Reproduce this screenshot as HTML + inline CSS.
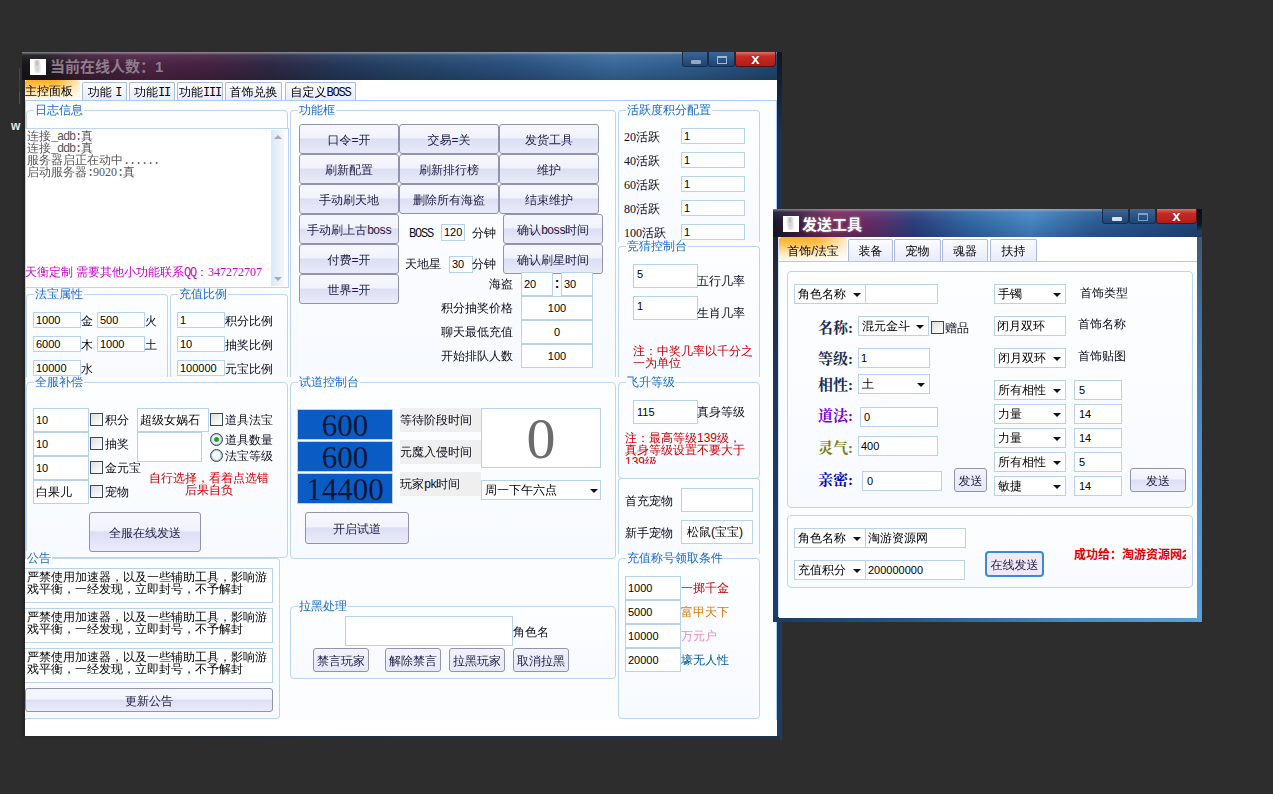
<!DOCTYPE html>
<html lang="zh-CN"><head><meta charset="utf-8"><title>UI</title>
<style>
html,body{margin:0;padding:0}
body{width:1273px;height:794px;overflow:hidden;background:#2d2d2d;position:relative;
 font:12px/12px "Liberation Sans","WenQuanYi Zen Hei","Noto Sans CJK SC",sans-serif;color:#101028}
div,span,i{box-sizing:content-box}
.abs,.t,.tt,.g,.gl,.i,.b,.ck,.rd,.tab,.page,.cb,.cbx,.bp,.lb,.w1frame,.w1title,.w2frame,.w2title{position:absolute}
.t{white-space:nowrap;height:12px;line-height:12px;font-size:12px;color:#0c0c1c}
.mn{font:12px/12px "Liberation Mono",monospace;letter-spacing:-1.2px}
.sm{font-family:"Liberation Serif","WenQuanYi Zen Hei","Noto Sans CJK SC",serif}
.tt{white-space:nowrap;font:bold 15px/18px "Liberation Sans","Noto Sans CJK SC",sans-serif}
.lb{white-space:nowrap;font:bold 15px/16px "Liberation Serif","Noto Serif CJK SC",serif}
.g{border:1px solid #bdd6f0;border-radius:4px;background:linear-gradient(180deg,#fdfeff,#f7faff)}
.gl{height:14px;line-height:14px;color:#1c6cc4;white-space:nowrap;text-align:center;font-size:12px}
.i{border:1px solid #b9d2ec;background:#fff;overflow:hidden}
.cj{font-size:12px !important}
.it{position:absolute;white-space:nowrap;height:12px;line-height:12px;font-size:11px;color:#000}
.b{border:1px solid #9193ac;border-radius:3px;text-align:center;color:#1c1c40;white-space:nowrap;
 background:linear-gradient(180deg,#f7f8fe 0,#f1f3fc 46%,#dcdff4 50%,#e9ebf9 100%);overflow:hidden}
.b>span{display:block}
.b.flat{background:linear-gradient(180deg,#f1f2fc 0,#e6e8f8 100%)}
.b.focus{border:2px solid #3c8ccc;border-radius:4px;margin:-1px;background:#f1e8f8}
.ck{border:1px solid #2e4a66;background:linear-gradient(135deg,#dcdcd8,#f4f4f2 60%,#fff)}
.rd{border:1px solid #2c4c64;box-shadow:inset 0 0 0 1px rgba(44,76,100,.3);border-radius:50%;background:radial-gradient(circle at 40% 40%,#fff,#dfe6ec)}
.dot{position:absolute;left:3px;top:3px;width:5px;height:5px;border-radius:50%;background:#28a428}
.ar{position:absolute;width:0;height:0;border:4px solid transparent;border-bottom:none;border-top:4px solid #0c1030}
.tab{border:1px solid #a9bcdc;border-bottom:none;border-radius:2px 2px 0 0;text-align:center;color:#000;white-space:nowrap;
 background:linear-gradient(180deg,#fbfcff,#e6ebf9)}
.tab>span{display:block;line-height:18px}
.tab.on{border:none;background:linear-gradient(90deg,rgba(255,255,255,0) 55%,rgba(255,255,255,.75) 100%),linear-gradient(180deg,#ffae20 0,#ffc75c 35%,#ffe9bd 70%,#fdfcf8 100%)}
.tab.on>span{line-height:22px}
.page{border:1px solid #a9cdf0;border-bottom:none;background:#fbfdff}
.w1frame{background:#262628}
.w1title{background:linear-gradient(180deg,rgba(255,255,255,.10),rgba(255,255,255,0) 45%,rgba(0,0,0,.18)),linear-gradient(90deg,#17151a 0,#1c171e 3%,#3a1c34 7%,#4e2344 16%,#43223f 25%,#2e2844 33%,#24385a 42%,#254366 50%,#2b507e 65%,#396898 78%,#2f5c8c 88%,#1f456f 100%)}
.w2frame{background:linear-gradient(90deg,#1c3a5c 0,#2c5a8c 50%,#4a8cc8 100%)}
.w2title{background:linear-gradient(180deg,rgba(255,255,255,.10),rgba(255,255,255,0) 45%,rgba(0,0,0,.15)),linear-gradient(90deg,#17182a 0,#3c1f42 6%,#7a2a5c 14%,#642c68 23%,#2c3f7c 33%,#2f64a0 45%,#4684c0 60%,#2c5c94 75%,#1e4474 100%)}
.cb{background:linear-gradient(180deg,#3c6494,#1c4474);border:1px solid #16304c;border-top:none;box-sizing:border-box;border-radius:0 0 3px 3px}
.cbx{background:linear-gradient(180deg,#e0706a 0,#c42c26 30%,#b41c18 100%);border:1px solid #501410;border-top:none;box-sizing:border-box;border-radius:0 0 4px 3px;text-align:center}
.cbx>span{display:block;color:#fff;font:bold 15px/13px "Liberation Sans",sans-serif;text-shadow:0 0 2px rgba(80,0,0,.6)}
.bp{border:1px solid #b9d4f0;background:#0a5cc4;text-align:center;overflow:hidden}
.bp>span{display:block;font:31px/32px "Liberation Serif",serif;color:#0a1838}
.big0{display:block;text-align:center;font:58px/60px "Liberation Serif",serif;color:#6c6c6c}
.fig{position:absolute;left:3px;top:1px;width:9px;height:13px;background:radial-gradient(ellipse at 45% 25%,#b9b3b6 0,#d8d3d5 25%,rgba(255,255,255,0) 55%),radial-gradient(ellipse at 50% 65%,#cfc9cc 0,#e6e2e4 35%,rgba(255,255,255,0) 65%)}
</style></head>
<body>
<div class="w1frame" style="left:22px;top:52px;width:760px;height:688px;"></div>
<div class="w1title" style="left:22px;top:52px;width:758px;height:28px;"></div>
<div class="abs" style="left:22px;top:52px;width:758px;height:3px;background:linear-gradient(180deg,rgba(200,205,210,.55),rgba(200,205,210,0))"></div>
<div class="abs" style="left:777px;top:52px;width:5px;height:688px;background:linear-gradient(180deg,#10161e 0,#1b3352 12%,#1f3c62 100%)"></div>
<div class="abs" style="left:25px;top:80px;width:752px;height:656px;background:#fff"></div>
<div class="abs" style="left:22px;top:736px;width:758px;height:4px;background:linear-gradient(180deg,rgba(45,45,45,0),#2d2d2d),linear-gradient(90deg,#29292b 0,#29292b 20%,#1f3048 45%,#1d3350 100%)"></div>
<div class="abs" style="left:30px;top:59px;width:16px;height:16px;background:#fff"><i class="fig"></i></div>
<div class="tt" style="left:50px;top:58px;color:#8d7e8b">当前在线人数：1</div>
<div class="cb" style="left:682px;top:52px;width:26px;height:15px;"><i style="position:absolute;left:8px;top:8px;width:10px;height:4px;background:#8fa9c8;border-radius:1px"></i></div>
<div class="cb" style="left:708px;top:52px;width:27px;height:15px;"><i style="position:absolute;left:8px;top:4px;width:10px;height:8px;border:1px solid #9fb9d8;border-top-width:2px;box-sizing:border-box"></i></div>
<div class="cbx" style="left:735px;top:52px;width:41px;height:15px;"><span>x</span></div>
<div class="tab on" style="left:25px;top:80px;width:55px;height:20px;"><span style="text-align:left">主控面板</span></div>
<div class="tab" style="left:82px;top:82px;width:43px;height:18px;"><span>功能 <span class="mn">I</span></span></div>
<div class="tab" style="left:129px;top:82px;width:44px;height:18px;"><span>功能<span class="mn">II</span></span></div>
<div class="tab" style="left:177px;top:82px;width:44px;height:18px;"><span>功能<span class="mn">III</span></span></div>
<div class="tab" style="left:225px;top:82px;width:55px;height:18px;"><span>首饰兑换</span></div>
<div class="tab" style="left:285px;top:82px;width:69px;height:18px;"><span>自定义<span class="mn">BOSS</span></span></div>
<div class="page" style="left:25px;top:100px;width:750px;height:619px;"></div>
<div class="g" style="left:26px;top:110px;width:260px;height:169px;"></div>
<div class="gl" style="left:34px;top:103px;width:50px;background:#f9fbff">日志信息</div>
<div class="g" style="left:290px;top:110px;width:324px;height:266px;border-bottom:none;border-bottom-left-radius:0;border-bottom-right-radius:0;"></div>
<div class="gl" style="left:298px;top:103px;width:38px;background:#f9fbff">功能框</div>
<div class="g" style="left:618px;top:110px;width:140px;height:131px;border-bottom:none;border-bottom-left-radius:0;border-bottom-right-radius:0;"></div>
<div class="gl" style="left:626px;top:103px;width:86px;background:#f9fbff">活跃度积分配置</div>
<div class="g" style="left:618px;top:246px;width:140px;height:130px;border-bottom:none;border-bottom-left-radius:0;border-bottom-right-radius:0;"></div>
<div class="gl" style="left:626px;top:239px;width:62px;background:#f9fbff">竞猜控制台</div>
<div class="g" style="left:26px;top:294px;width:140px;height:82px;border-bottom:none;border-bottom-left-radius:0;border-bottom-right-radius:0;"></div>
<div class="gl" style="left:34px;top:287px;width:50px;background:#f9fbff">法宝属性</div>
<div class="g" style="left:170px;top:294px;width:116px;height:82px;border-bottom:none;border-bottom-left-radius:0;border-bottom-right-radius:0;"></div>
<div class="gl" style="left:178px;top:287px;width:50px;background:#f9fbff">充值比例</div>
<div class="g" style="left:26px;top:382px;width:260px;height:174px;"></div>
<div class="gl" style="left:34px;top:375px;width:50px;background:#f9fbff">全服补偿</div>
<div class="g" style="left:290px;top:382px;width:324px;height:175px;"></div>
<div class="gl" style="left:298px;top:375px;width:62px;background:#f9fbff">试道控制台</div>
<div class="g" style="left:618px;top:382px;width:140px;height:95px;"></div>
<div class="gl" style="left:626px;top:375px;width:50px;background:#f9fbff">飞升等级</div>
<div class="g" style="left:618px;top:478px;width:140px;height:75px;border-bottom:none;border-bottom-left-radius:0;border-bottom-right-radius:0;"></div>
<div class="g" style="left:618px;top:558px;width:140px;height:159px;"></div>
<div class="gl" style="left:626px;top:551px;width:98px;background:#f9fbff">充值称号领取条件</div>
<div class="g" style="left:25px;top:558px;width:254px;height:159px;border-left:none;border-top-left-radius:0;border-bottom-left-radius:0;"></div>
<div class="gl" style="left:26px;top:551px;width:26px;background:#f9fbff">公告</div>
<div class="g" style="left:290px;top:606px;width:324px;height:71px;"></div>
<div class="gl" style="left:298px;top:599px;width:50px;background:#f9fbff">拉黑处理</div>
<div class="i" style="left:25px;top:128px;width:262px;height:158px;border-color:#bcd4ee"></div>
<div class="abs" style="left:271px;top:130px;width:13px;height:156px;background:linear-gradient(90deg,#dce8f8,#f3f6fc)"></div>
<i class="abs" style="left:274px;top:135px;border:4px solid transparent;border-top:none;border-bottom:4px solid #a6acb6"></i>
<i class="abs" style="left:274px;top:277px;border:4px solid transparent;border-bottom:none;border-top:4px solid #a6acb6"></i>
<div class="t sm" style="left:27px;top:130px;color:#555">连接<span class="mn">_adb:</span>真</div>
<div class="t sm" style="left:27px;top:142px;color:#555">连接<span class="mn">_ddb:</span>真</div>
<div class="t sm" style="left:27px;top:154px;color:#555">服务器启正在动中<span class="mn">......</span></div>
<div class="t sm" style="left:27px;top:166px;color:#555">启动服务器<span class="mn">:</span>9020<span class="mn">:</span>真</div>
<div class="t sm" style="left:25px;top:266px;color:#cc00cc">天衡定制 需要其他小功能联系<span class="mn">QQ</span>：347272707</div>
<div class="b" style="left:299px;top:124px;width:98px;height:28px;"><span style="line-height:30px">口令=开</span></div>
<div class="b" style="left:399px;top:124px;width:98px;height:28px;"><span style="line-height:30px">交易=关</span></div>
<div class="b" style="left:499px;top:124px;width:98px;height:28px;"><span style="line-height:30px">发货工具</span></div>
<div class="b" style="left:299px;top:154px;width:98px;height:28px;"><span style="line-height:30px">刷新配置</span></div>
<div class="b" style="left:399px;top:154px;width:98px;height:28px;"><span style="line-height:30px">刷新排行榜</span></div>
<div class="b" style="left:499px;top:154px;width:98px;height:28px;"><span style="line-height:30px">维护</span></div>
<div class="b" style="left:299px;top:184px;width:98px;height:28px;"><span style="line-height:30px">手动刷天地</span></div>
<div class="b" style="left:399px;top:184px;width:98px;height:28px;"><span style="line-height:30px">删除所有海盗</span></div>
<div class="b" style="left:499px;top:184px;width:98px;height:28px;"><span style="line-height:30px">结束维护</span></div>
<div class="b" style="left:299px;top:214px;width:98px;height:28px;"><span style="line-height:30px">手动刷上古<span class="mn">boss</span></span></div>
<div class="b" style="left:299px;top:244px;width:98px;height:28px;"><span style="line-height:30px">付费=开</span></div>
<div class="b" style="left:299px;top:274px;width:98px;height:28px;"><span style="line-height:30px">世界=开</span></div>
<div class="b" style="left:503px;top:214px;width:98px;height:28px;"><span style="line-height:30px">确认<span class="mn">boss</span>时间</span></div>
<div class="b" style="left:503px;top:244px;width:98px;height:28px;"><span style="line-height:30px">确认刷星时间</span></div>
<div class="t sm" style="left:409px;top:227px;"><span class="mn">BOSS</span></div>
<div class="i" style="left:441px;top:224px;width:22px;height:15px;"><span class="it" style="left:2px;top:1px">120</span></div>
<div class="t" style="left:472px;top:227px;">分钟</div>
<div class="t" style="left:405px;top:258px;">天地星</div>
<div class="i" style="left:449px;top:256px;width:22px;height:15px;"><span class="it" style="left:2px;top:1px">30</span></div>
<div class="t" style="left:472px;top:258px;">分钟</div>
<div class="t" style="left:489px;top:278px;">海盗</div>
<div class="i" style="left:521px;top:272px;width:30px;height:22px;"><span class="it" style="left:2px;top:5px">20</span></div>
<div class="t" style="left:554px;top:277px;font-weight:bold;font-size:14px;width:6px;text-align:center">:</div>
<div class="i" style="left:561px;top:272px;width:30px;height:22px;"><span class="it" style="left:2px;top:5px">30</span></div>
<div class="t" style="left:441px;top:302px;">积分抽奖价格</div>
<div class="i" style="left:521px;top:296px;width:70px;height:22px;"><span class="it" style="left:0;width:70px;top:5px;text-align:center">100</span></div>
<div class="t" style="left:441px;top:326px;">聊天最低充值</div>
<div class="i" style="left:521px;top:320px;width:70px;height:22px;"><span class="it" style="left:0;width:70px;top:5px;text-align:center">0</span></div>
<div class="t" style="left:441px;top:350px;">开始排队人数</div>
<div class="i" style="left:521px;top:344px;width:70px;height:22px;"><span class="it" style="left:0;width:70px;top:5px;text-align:center">100</span></div>
<div class="t sm" style="left:624px;top:131px;">20活跃</div>
<div class="i" style="left:681px;top:128px;width:62px;height:14px;"><span class="it" style="left:2px;top:1px">1</span></div>
<div class="t sm" style="left:624px;top:155px;">40活跃</div>
<div class="i" style="left:681px;top:152px;width:62px;height:14px;"><span class="it" style="left:2px;top:1px">1</span></div>
<div class="t sm" style="left:624px;top:179px;">60活跃</div>
<div class="i" style="left:681px;top:176px;width:62px;height:14px;"><span class="it" style="left:2px;top:1px">1</span></div>
<div class="t sm" style="left:624px;top:203px;">80活跃</div>
<div class="i" style="left:681px;top:200px;width:62px;height:14px;"><span class="it" style="left:2px;top:1px">1</span></div>
<div class="t sm" style="left:624px;top:227px;">100活跃</div>
<div class="i" style="left:681px;top:224px;width:62px;height:14px;"><span class="it" style="left:2px;top:1px">1</span></div>
<div class="i" style="left:633px;top:264px;width:63px;height:22px;font-size:12px"><span class="it" style="left:3px;top:3px">5</span></div>
<div class="t" style="left:697px;top:275px;">五行几率</div>
<div class="i" style="left:633px;top:296px;width:63px;height:22px;"><span class="it" style="left:3px;top:3px">1</span></div>
<div class="t" style="left:697px;top:307px;">生肖几率</div>
<div class="t" style="left:633px;top:345px;color:#cc0000">注：中奖几率以千分之</div>
<div class="t" style="left:633px;top:357px;color:#cc0000">一为单位</div>
<div class="i" style="left:33px;top:312px;width:46px;height:14px;"><span class="it" style="left:2px;top:1px">1000</span></div>
<div class="t" style="left:81px;top:315px;">金</div>
<div class="i" style="left:97px;top:312px;width:46px;height:14px;"><span class="it" style="left:2px;top:1px">500</span></div>
<div class="t" style="left:145px;top:315px;">火</div>
<div class="i" style="left:33px;top:336px;width:46px;height:14px;"><span class="it" style="left:2px;top:1px">6000</span></div>
<div class="t" style="left:81px;top:339px;">木</div>
<div class="i" style="left:97px;top:336px;width:46px;height:14px;"><span class="it" style="left:2px;top:1px">1000</span></div>
<div class="t" style="left:145px;top:339px;">土</div>
<div class="i" style="left:33px;top:360px;width:46px;height:14px;"><span class="it" style="left:2px;top:1px">10000</span></div>
<div class="t" style="left:81px;top:363px;">水</div>
<div class="i" style="left:177px;top:312px;width:46px;height:14px;"><span class="it" style="left:2px;top:1px">1</span></div>
<div class="t" style="left:225px;top:315px;">积分比例</div>
<div class="i" style="left:177px;top:336px;width:46px;height:14px;"><span class="it" style="left:2px;top:1px">10</span></div>
<div class="t" style="left:225px;top:339px;">抽奖比例</div>
<div class="i" style="left:177px;top:360px;width:46px;height:14px;"><span class="it" style="left:2px;top:1px">100000</span></div>
<div class="t" style="left:225px;top:363px;">元宝比例</div>
<div class="i" style="left:33px;top:408px;width:54px;height:22px;"><span class="it" style="left:2px;top:5px">10</span></div>
<div class="ck" style="left:90px;top:413px;width:11px;height:11px;"></div>
<div class="t" style="left:105px;top:414px;">积分</div>
<div class="i" style="left:33px;top:432px;width:54px;height:22px;"><span class="it" style="left:2px;top:5px">10</span></div>
<div class="ck" style="left:90px;top:437px;width:11px;height:11px;"></div>
<div class="t" style="left:105px;top:438px;">抽奖</div>
<div class="i" style="left:33px;top:456px;width:54px;height:22px;"><span class="it" style="left:2px;top:5px">10</span></div>
<div class="ck" style="left:90px;top:461px;width:11px;height:11px;"></div>
<div class="t" style="left:105px;top:462px;">金元宝</div>
<div class="i" style="left:33px;top:480px;width:54px;height:22px;"><span class="it cj" style="left:2px;top:5px">白果儿</span></div>
<div class="ck" style="left:90px;top:485px;width:11px;height:11px;"></div>
<div class="t" style="left:105px;top:486px;">宠物</div>
<div class="i" style="left:137px;top:408px;width:70px;height:22px;"><span class="it cj" style="left:2px;top:5px">超级女娲石</span></div>
<div class="i" style="left:137px;top:432px;width:63px;height:28px;"></div>
<div class="ck" style="left:210px;top:413px;width:11px;height:11px;"></div>
<div class="t" style="left:225px;top:414px;">道具法宝</div>
<div class="rd" style="left:210px;top:433px;width:11px;height:11px;"><i class="dot"></i></div>
<div class="t" style="left:225px;top:434px;">道具数量</div>
<div class="rd" style="left:210px;top:449px;width:11px;height:11px;"></div>
<div class="t" style="left:225px;top:450px;">法宝等级</div>
<div class="t" style="left:137px;top:472px;color:#cc0000;width:144px;text-align:center">自行选择，看着点选错</div>
<div class="t" style="left:137px;top:484px;color:#cc0000;width:144px;text-align:center">后果自负</div>
<div class="b" style="left:89px;top:512px;width:110px;height:38px;"><span style="line-height:40px">全服在线发送</span></div>
<div class="bp" style="left:297px;top:409px;width:94px;height:29px;"><span>600</span></div>
<div class="bp" style="left:297px;top:441px;width:94px;height:29px;"><span>600</span></div>
<div class="bp" style="left:297px;top:473px;width:94px;height:29px;"><span>14400</span></div>
<div class="abs" style="left:400px;top:408px;width:81px;height:24px;background:#efefef"></div>
<div class="t" style="left:400px;top:414px;">等待阶段时间</div>
<div class="abs" style="left:400px;top:440px;width:81px;height:24px;background:#efefef"></div>
<div class="t" style="left:400px;top:446px;">元魔入侵时间</div>
<div class="abs" style="left:400px;top:472px;width:81px;height:24px;background:#efefef"></div>
<div class="t" style="left:400px;top:478px;">玩家<span class="mn">pk</span>时间</div>
<div class="i" style="left:481px;top:408px;width:118px;height:58px;"><span class="big0">0</span></div>
<div class="i" style="left:481px;top:480px;width:118px;height:18px;"><span class="it cj" style="left:3px;top:3px">周一下午六点</span><i class="ar" style="left:108px;top:8px"></i></div>
<div class="b" style="left:305px;top:512px;width:102px;height:30px;"><span style="line-height:32px">开启试道</span></div>
<div class="i" style="left:633px;top:400px;width:63px;height:22px;"><span class="it" style="left:3px;top:5px">115</span></div>
<div class="t" style="left:697px;top:406px;">真身等级</div>
<div class="abs" style="left:625px;top:432px;width:124px;height:32px;overflow:hidden"><div class="t" style="position:static;color:#cc0000;white-space:normal;width:124px;height:auto">注：最高等级139级，真身等级设置不要大于139级</div></div>
<div class="t" style="left:625px;top:495px;">首充宠物</div>
<div class="i" style="left:681px;top:488px;width:70px;height:22px;"></div>
<div class="t" style="left:625px;top:527px;">新手宠物</div>
<div class="i" style="left:681px;top:520px;width:70px;height:22px;"><span class="it cj" style="left:5px;top:5px">松鼠(宝宝)</span></div>
<div class="i" style="left:625px;top:576px;width:54px;height:22px;"><span class="it" style="left:2px;top:5px">1000</span></div>
<div class="t" style="left:681px;top:582px;color:#c40000">一掷千金</div>
<div class="i" style="left:625px;top:600px;width:54px;height:22px;"><span class="it" style="left:2px;top:5px">5000</span></div>
<div class="t" style="left:681px;top:606px;color:#e07800">富甲天下</div>
<div class="i" style="left:625px;top:624px;width:54px;height:22px;"><span class="it" style="left:2px;top:5px">10000</span></div>
<div class="t" style="left:681px;top:630px;color:#f08cb8">万元户</div>
<div class="i" style="left:625px;top:648px;width:54px;height:22px;"><span class="it" style="left:2px;top:5px">20000</span></div>
<div class="t" style="left:681px;top:654px;color:#005c98">壕无人性</div>
<div class="i" style="left:25px;top:568px;width:247px;height:33px;border-left:none;width:247px"></div>
<div class="t" style="left:27px;top:571px;color:#000">严禁使用加速器，以及一些辅助工具，影响游</div>
<div class="t" style="left:27px;top:583px;color:#000">戏平衡，一经发现，立即封号，不予解封</div>
<div class="i" style="left:25px;top:608px;width:247px;height:33px;border-left:none;width:247px"></div>
<div class="t" style="left:27px;top:611px;color:#000">严禁使用加速器，以及一些辅助工具，影响游</div>
<div class="t" style="left:27px;top:623px;color:#000">戏平衡，一经发现，立即封号，不予解封</div>
<div class="i" style="left:25px;top:648px;width:247px;height:33px;border-left:none;width:247px"></div>
<div class="t" style="left:27px;top:651px;color:#000">严禁使用加速器，以及一些辅助工具，影响游</div>
<div class="t" style="left:27px;top:663px;color:#000">戏平衡，一经发现，立即封号，不予解封</div>
<div class="b" style="left:25px;top:688px;width:246px;height:22px;"><span style="line-height:24px">更新公告</span></div>
<div class="i" style="left:345px;top:616px;width:166px;height:28px;"></div>
<div class="t" style="left:513px;top:626px;">角色名</div>
<div class="b flat" style="left:313px;top:648px;width:54px;height:22px;"><span style="line-height:24px">禁言玩家</span></div>
<div class="b flat" style="left:385px;top:648px;width:54px;height:22px;"><span style="line-height:24px">解除禁言</span></div>
<div class="b flat" style="left:449px;top:648px;width:54px;height:22px;"><span style="line-height:24px">拉黑玩家</span></div>
<div class="b flat" style="left:513px;top:648px;width:54px;height:22px;"><span style="line-height:24px">取消拉黑</span></div>
<div class="t" style="left:11px;top:119px;color:#e8e8e8;font:bold 12px/14px Liberation Sans,sans-serif">w</div>
<div class="abs" style="left:19px;top:68px;width:1px;height:12px;background:#a02020"></div>
<div class="abs" style="left:19px;top:80px;width:1px;height:12px;background:#3030a0"></div>
<div class="abs" style="left:19px;top:92px;width:1px;height:12px;background:#207030"></div>
<div class="w2frame" style="left:773px;top:209px;width:429px;height:413px;"></div>
<div class="abs" style="left:773px;top:237px;width:6px;height:385px;background:linear-gradient(180deg,#23222f 0,#2a2c42 15%,#1f3a60 55%,#1c3e6c 100%)"></div>
<div class="abs" style="left:778px;top:237px;width:1px;height:380px;background:#cfe2f6"></div>
<div class="abs" style="left:1197px;top:237px;width:5px;height:385px;background:linear-gradient(180deg,#42586f 0,#456f9a 20%,#4f90cc 55%,#5aa0dc 100%)"></div>
<div class="abs" style="left:773px;top:617px;width:429px;height:5px;background:linear-gradient(90deg,#1c3a60 0,#2a5a90 35%,#4a8ac6 70%,#5aa0dc 100%)"></div>
<div class="w2title" style="left:773px;top:209px;width:429px;height:28px;"></div>
<div class="abs" style="left:773px;top:209px;width:429px;height:3px;background:linear-gradient(180deg,rgba(200,210,225,.5),rgba(200,210,225,0))"></div>
<div class="abs" style="left:1197px;top:209px;width:5px;height:22px;background:linear-gradient(180deg,#0c1016,#10161e 70%,#2a3a4c)"></div>
<div class="abs" style="left:779px;top:237px;width:418px;height:380px;background:#fff"></div>
<div class="abs" style="left:783px;top:216px;width:16px;height:16px;background:#fff"><i class="fig"></i></div>
<div class="tt" style="left:802px;top:216px;color:#fff;text-shadow:0 0 3px rgba(255,255,255,.45)">发送工具</div>
<div class="cb" style="left:1102px;top:209px;width:27px;height:15px;"><i style="position:absolute;left:9px;top:8px;width:10px;height:4px;background:#d4e2f2;border-radius:1px"></i></div>
<div class="cb" style="left:1129px;top:209px;width:27px;height:15px;"><i style="position:absolute;left:8px;top:4px;width:10px;height:8px;border:1px solid #7f9fc6;border-top-width:2px;box-sizing:border-box"></i></div>
<div class="cbx" style="left:1156px;top:209px;width:41px;height:15px;"><span>x</span></div>
<div class="tab on" style="left:779px;top:237px;width:68px;height:24px;border-radius:3px 3px 0 0"><span style="line-height:28px">首饰/法宝</span></div>
<div class="tab" style="left:848px;top:239px;width:43px;height:22px;"><span style="line-height:22px">装备</span></div>
<div class="tab" style="left:894px;top:239px;width:45px;height:22px;"><span style="line-height:22px">宠物</span></div>
<div class="tab" style="left:942px;top:239px;width:44px;height:22px;"><span style="line-height:22px">魂器</span></div>
<div class="tab" style="left:990px;top:239px;width:45px;height:22px;"><span style="line-height:22px">扶持</span></div>
<div class="page" style="left:779px;top:261px;width:418px;height:356px;border-right:none;border-left:none"></div>
<div class="g" style="left:787px;top:271px;width:404px;height:235px;"></div>
<div class="g" style="left:787px;top:515px;width:404px;height:71px;"></div>
<div class="i" style="left:794px;top:284px;width:70px;height:18px;"><span class="it cj" style="left:3px;top:3px">角色名称</span><i class="ar" style="left:58px;top:8px"></i></div>
<div class="i" style="left:865px;top:284px;width:71px;height:18px;"></div>
<div class="i" style="left:994px;top:284px;width:70px;height:18px;"><span class="it cj" style="left:3px;top:3px">手镯</span><i class="ar" style="left:58px;top:8px"></i></div>
<div class="t" style="left:1080px;top:287px;">首饰类型</div>
<div class="lb" style="left:818px;top:320px;color:#1c2a4c">名称:</div>
<div class="i" style="left:858px;top:316px;width:69px;height:18px;"><span class="it cj" style="left:3px;top:3px">混元金斗</span><i class="ar" style="left:57px;top:8px"></i></div>
<div class="ck" style="left:931px;top:321px;width:11px;height:11px;"></div>
<div class="t" style="left:945px;top:322px;">赠品</div>
<div class="i" style="left:994px;top:316px;width:70px;height:18px;"><span class="it cj" style="left:2px;top:3px">闭月双环</span></div>
<div class="t" style="left:1078px;top:318px;">首饰名称</div>
<div class="lb" style="left:818px;top:351px;color:#1c2a4c">等级:</div>
<div class="i" style="left:858px;top:348px;width:70px;height:18px;"><span class="it" style="left:2px;top:3px">1</span></div>
<div class="i" style="left:994px;top:348px;width:70px;height:18px;"><span class="it cj" style="left:3px;top:3px">闭月双环</span><i class="ar" style="left:58px;top:8px"></i></div>
<div class="t" style="left:1078px;top:350px;">首饰贴图</div>
<div class="lb" style="left:818px;top:377px;color:#1c2a4c">相性:</div>
<div class="i" style="left:858px;top:374px;width:70px;height:18px;"><span class="it cj" style="left:3px;top:3px">土</span><i class="ar" style="left:58px;top:8px"></i></div>
<div class="lb" style="left:818px;top:408px;color:#7a00d0">道法:</div>
<div class="i" style="left:860px;top:407px;width:76px;height:18px;"><span class="it" style="left:3px;top:3px">0</span></div>
<div class="lb" style="left:818px;top:440px;color:#7c7c10">灵气:</div>
<div class="i" style="left:858px;top:436px;width:78px;height:18px;"><span class="it" style="left:2px;top:3px">400</span></div>
<div class="lb" style="left:818px;top:472px;color:#0808b8">亲密:</div>
<div class="i" style="left:862px;top:471px;width:78px;height:18px;"><span class="it" style="left:4px;top:3px">0</span></div>
<div class="b flat" style="left:954px;top:468px;width:31px;height:22px;"><span style="line-height:24px">发送</span></div>
<div class="i" style="left:994px;top:380px;width:70px;height:18px;"><span class="it cj" style="left:3px;top:3px">所有相性</span><i class="ar" style="left:58px;top:8px"></i></div>
<div class="i" style="left:1074px;top:380px;width:46px;height:18px;"><span class="it" style="left:4px;top:3px">5</span></div>
<div class="i" style="left:994px;top:404px;width:70px;height:18px;"><span class="it cj" style="left:3px;top:3px">力量</span><i class="ar" style="left:58px;top:8px"></i></div>
<div class="i" style="left:1074px;top:404px;width:46px;height:18px;"><span class="it" style="left:4px;top:3px">14</span></div>
<div class="i" style="left:994px;top:428px;width:70px;height:18px;"><span class="it cj" style="left:3px;top:3px">力量</span><i class="ar" style="left:58px;top:8px"></i></div>
<div class="i" style="left:1074px;top:428px;width:46px;height:18px;"><span class="it" style="left:4px;top:3px">14</span></div>
<div class="i" style="left:994px;top:452px;width:70px;height:18px;"><span class="it cj" style="left:3px;top:3px">所有相性</span><i class="ar" style="left:58px;top:8px"></i></div>
<div class="i" style="left:1074px;top:452px;width:46px;height:18px;"><span class="it" style="left:4px;top:3px">5</span></div>
<div class="i" style="left:994px;top:476px;width:70px;height:18px;"><span class="it cj" style="left:3px;top:3px">敏捷</span><i class="ar" style="left:58px;top:8px"></i></div>
<div class="i" style="left:1074px;top:476px;width:46px;height:18px;"><span class="it" style="left:4px;top:3px">14</span></div>
<div class="b" style="left:1130px;top:468px;width:54px;height:22px;"><span style="line-height:24px">发送</span></div>
<div class="i" style="left:794px;top:528px;width:70px;height:18px;"><span class="it cj" style="left:3px;top:3px">角色名称</span><i class="ar" style="left:58px;top:8px"></i></div>
<div class="i" style="left:865px;top:528px;width:99px;height:18px;"><span class="it cj" style="left:2px;top:3px">淘游资源网</span></div>
<div class="i" style="left:794px;top:560px;width:70px;height:18px;"><span class="it cj" style="left:3px;top:3px">充值积分</span><i class="ar" style="left:58px;top:8px"></i></div>
<div class="i" style="left:865px;top:560px;width:98px;height:18px;"><span class="it" style="left:2px;top:3px">200000000</span></div>
<div class="b focus" style="left:986px;top:552px;width:55px;height:22px;"><span style="line-height:24px">在线发送</span></div>
<div class="abs" style="left:1074px;top:548px;width:112px;height:14px;overflow:hidden"><div class="t" style="position:static;color:#e00000;font:bold 12px/14px Liberation Sans,Noto Sans CJK SC,sans-serif">成功给：淘游资源网2</div></div>
</body></html>
